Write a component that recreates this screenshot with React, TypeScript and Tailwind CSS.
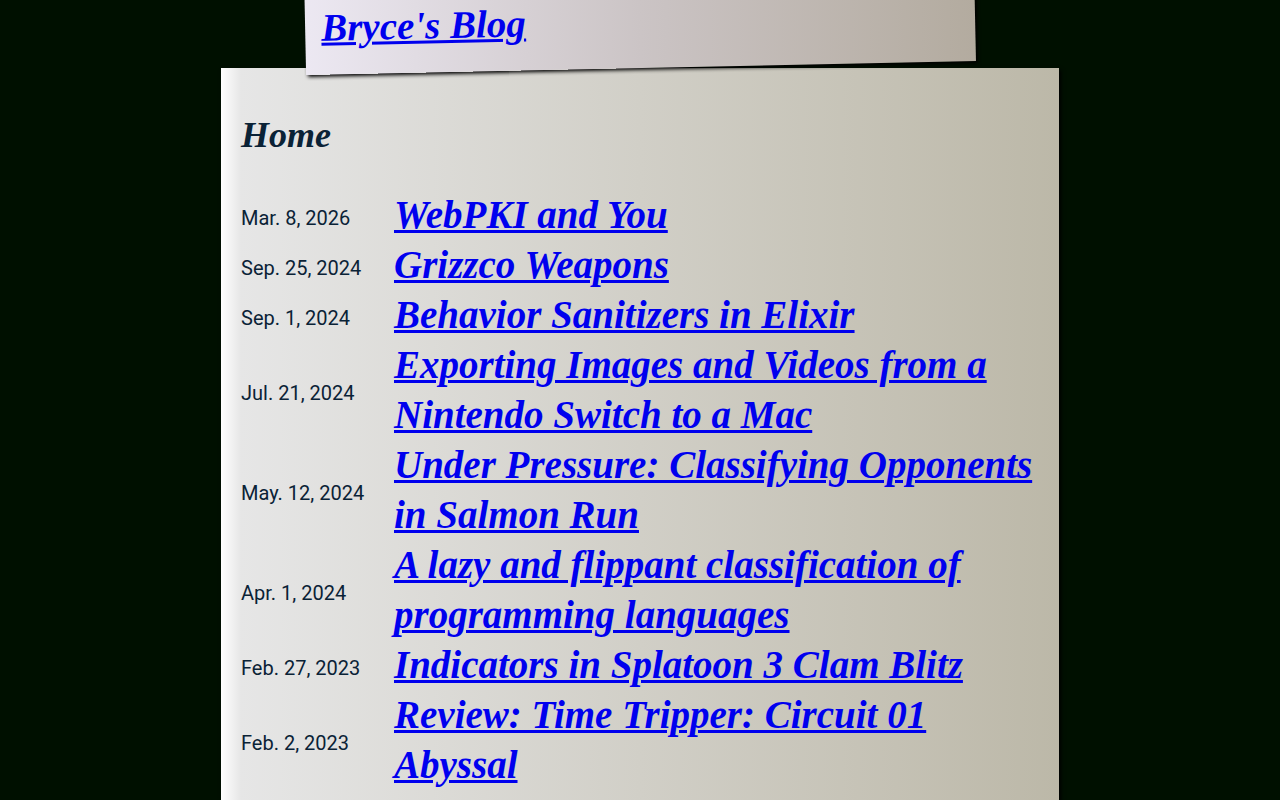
interface Post {
  date: string;
  title: string;
  slug: string;
}

const posts: Post[] = [
  { date: 'Mar. 8, 2026', title: 'WebPKI and You', slug: 'webpki-and-you' },
  { date: 'Sep. 25, 2024', title: 'Grizzco Weapons', slug: 'grizzco-weapons' },
  { date: 'Sep. 1, 2024', title: 'Behavior Sanitizers in Elixir', slug: 'behavior-sanitizers' },
  { date: 'Jul. 21, 2024', title: 'Exporting Images and Videos from a Nintendo Switch to a Mac', slug: 'switch-to-mac' },
  { date: 'May. 12, 2024', title: 'Under Pressure: Classifying Opponents in Salmon Run', slug: 'under-pressure' },
  { date: 'Apr. 1, 2024', title: 'A lazy and flippant classification of programming languages', slug: 'language-classification' },
  { date: 'Feb. 27, 2023', title: 'Indicators in Splatoon 3 Clam Blitz', slug: 'clam-blitz' },
  { date: 'Feb. 2, 2023', title: 'Review: Time Tripper: Circuit 01 Abyssal', slug: 'time-tripper' },
];

function SiteHeader() {
  return (
    <header className="relative w-4/5 -mt-8 pt-7 pb-[22px] -rotate-[1.2deg] px-4 bg-linear-to-r from-[#ece8f2] via-[#cbc4c5] to-[#b3ab9f] shadow-[2px_2px_4px_#000]">
      <a
        href="/"
        className="block w-fit font-['Liberation_Serif',serif] text-[39px] leading-[50px] font-bold italic text-[#0000ee] underline decoration-3 underline-offset-2"
      >
        Bryce's Blog
      </a>
    </header>
  );
}

function PostRow({ post }: { post: Post }) {
  return (
    <li className="grid grid-cols-[120px_1fr] sm:grid-cols-[153px_1fr] items-center">
      <time className="pt-1.5 font-['Roboto',sans-serif] text-[20px]">{post.date}</time>
      <a
        href={`/posts/${post.slug}`}
        className="font-['Liberation_Serif',serif] text-[39px] leading-[50px] font-bold italic text-[#0000ee] underline decoration-3 underline-offset-2"
      >
        {post.title}
      </a>
    </li>
  );
}

export default function App() {
  return (
    <div className="min-h-screen bg-[#001000] text-[#0a2236] flex justify-center">
      <div className="w-full max-w-[838px] flex flex-col items-center">
        <SiteHeader />
        <main className="w-full grow px-5 pt-[42px] bg-[linear-gradient(to_right,#fff,#e6e6e6_20px,#d1cfc7_50%,#bcb8a8)] shadow-[2px_2px_4px_#000]">
          <h1 className="mb-[30px] font-['Liberation_Serif',serif] text-[36px] leading-[50px] font-bold italic">Home</h1>
          <ul>
            {posts.map((post) => (
              <PostRow key={post.slug} post={post} />
            ))}
          </ul>
        </main>
      </div>
    </div>
  );
}
